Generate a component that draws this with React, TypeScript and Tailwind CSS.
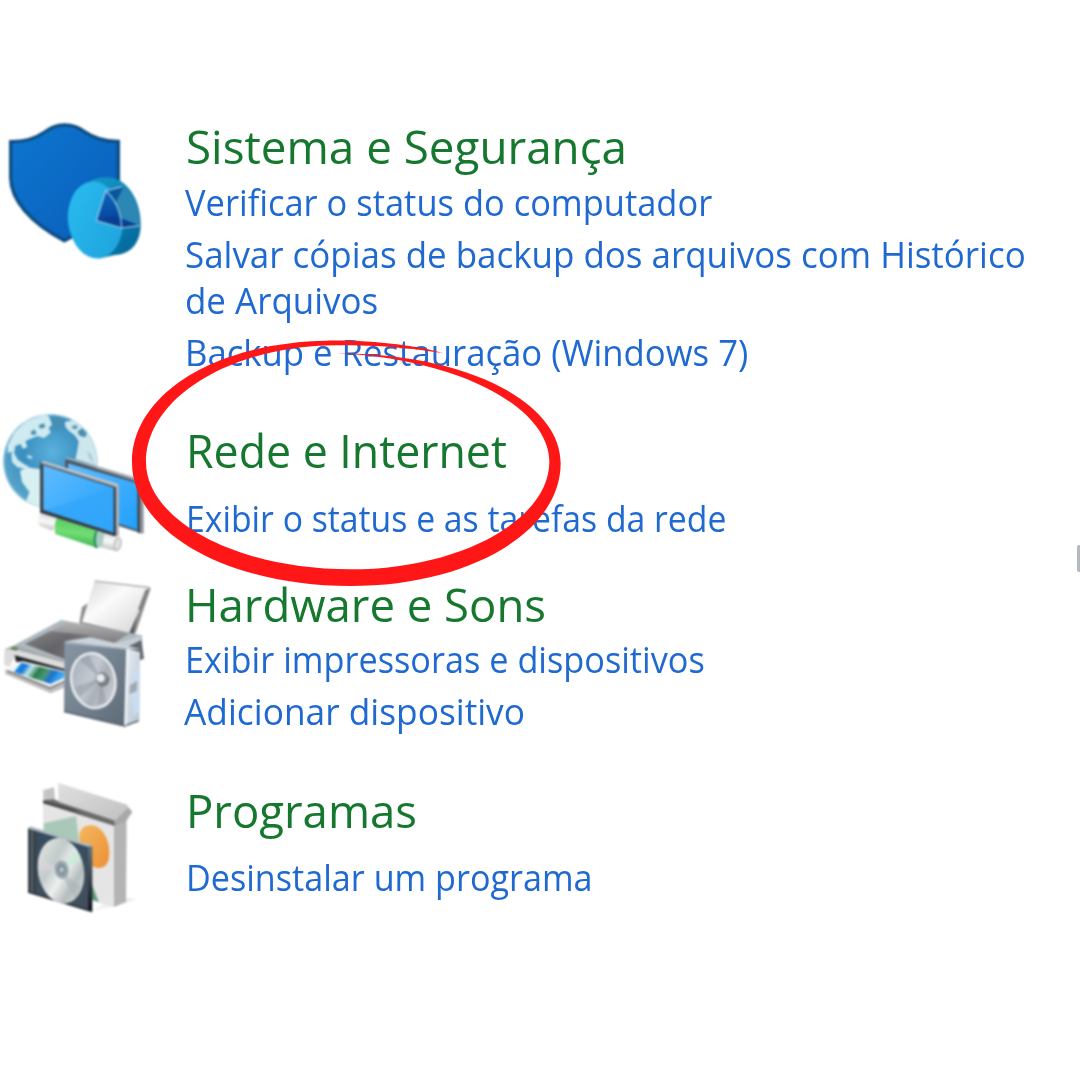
import type { ReactNode } from "react";

function ShieldIcon() {
  return (
    <svg viewBox="0 0 480 480" className="block h-[160px] w-[160px] blur-[0.8px]">
      <defs>
        <linearGradient id="shield" x1="0" y1="0" x2="1" y2="1">
          <stop offset="0" stopColor="#0d77cf" />
          <stop offset="1" stopColor="#0a5cba" />
        </linearGradient>
        <linearGradient id="pieFace" x1="0" y1="0" x2="1" y2="1">
          <stop offset="0" stopColor="#2abcf0" />
          <stop offset="1" stopColor="#1ea2dc" />
        </linearGradient>
        <linearGradient id="pieSide" x1="0" y1="0" x2="0.6" y2="1">
          <stop offset="0" stopColor="#1798cc" />
          <stop offset="1" stopColor="#046a9c" />
        </linearGradient>
        <linearGradient id="wedge" x1="0" y1="0" x2="0" y2="1">
          <stop offset="0" stopColor="#0a66b8" />
          <stop offset="1" stopColor="#053f98" />
        </linearGradient>
      </defs>
      <path d="M32 95 C78 96 108 84 134 66 C170 38 217 38 252 64 C281 84 311 95 355 94 L355 212 C355 282 290 344 193 392 C90 337 32 270 32 202 Z" fill="url(#shield)" stroke="#0b4c80" strokeWidth="10" />
      <path d="M270 214 C300 198 335 198 360 212 C400 236 423 290 422 344 C422 395 396 432 345 435 L300 445 Z" fill="url(#pieSide)" />
      <ellipse cx="286" cy="330" rx="82" ry="116" transform="rotate(-6 286 330)" fill="url(#pieFace)" />
      <path d="M317 243 L370 228 C400 250 420 300 419 346 L364 354 C362 310 345 268 317 243Z" fill="#2c87b4" />
      <path d="M317 243 L372 228 L345 282Z" fill="#08569d" />
      <path d="M317 243 C346 266 364 308 365 354 L289 332 Z" fill="url(#wedge)" />
      <path d="M289 332 L338 316 L417 346 L365 354Z" fill="#083f92" />
      <path d="M317 243 C346 266 364 308 365 354 L289 332 Z M317 243 L368 229 M365 354 L418 347" fill="none" stroke="#bce2f4" strokeWidth="3.5" opacity=".85" />
    </svg>
  );
}

function NetworkIcon() {
  return (
    <svg viewBox="0 0 480 480" className="block h-[160px] w-[160px] blur-[0.8px]">
      <defs>
        <radialGradient id="sea" cx=".52" cy=".4" r=".62">
          <stop offset="0" stopColor="#5ab2de" />
          <stop offset=".5" stopColor="#3b8fbe" />
          <stop offset="1" stopColor="#5fa9cc" />
        </radialGradient>
        <linearGradient id="screenTop" x1="0" y1="0" x2="1" y2="1">
          <stop offset="0" stopColor="#60bbff" />
          <stop offset="1" stopColor="#1fa0fb" />
        </linearGradient>
        <linearGradient id="screenLow" x1="0" y1="0" x2="1" y2="1">
          <stop offset="0" stopColor="#3aa9fa" />
          <stop offset="1" stopColor="#2fa5fb" />
        </linearGradient>
        <linearGradient id="plug" x1=".6" y1="0" x2=".4" y2="1">
          <stop offset="0" stopColor="#51c55c" />
          <stop offset=".5" stopColor="#72de74" />
          <stop offset="1" stopColor="#33a84a" />
        </linearGradient>
        <linearGradient id="cable" x1=".6" y1="0" x2=".4" y2="1">
          <stop offset="0" stopColor="#d5d5d5" />
          <stop offset=".5" stopColor="#fafafa" />
          <stop offset="1" stopColor="#b9b9b9" />
        </linearGradient>
        <clipPath id="globe"><circle cx="151" cy="184" r="142" /></clipPath>
      </defs>
      <g clipPath="url(#globe)">
        <circle cx="151" cy="184" r="142" fill="url(#sea)" />
        <path d="M140 40 L78 62 L42 98 L24 135 L22 160 L34 154 L36 186 L52 202 L72 206 L88 200 L72 192 L54 180 L42 160 L46 138 L62 132 L68 146 L82 142 L76 124 L92 116 L112 108 L132 114 L152 98 L146 84 L156 74 L150 56Z" fill="#cfeaf0" />
        <path d="M60 212 L82 202 L122 208 L128 330 L98 322 L78 304 L88 276 L66 246Z" fill="#d8f0f2" />
        <path d="M194 66 L232 58 L262 90 L288 140 L298 200 L248 184 L226 178 L232 150 L236 124 L224 106 L206 92 L196 80Z" fill="#cde7ec" />
        <path d="M232 96 L246 84 L262 96 L256 112 L240 108Z M92 96 L104 88 L110 102 L96 106Z M116 76 L132 70 L136 82 L120 86Z M216 78 L230 76 L232 86 L218 86Z" fill="#4a8fae" />
        <path d="M158 42 L198 54 L192 78 L170 94 L156 82Z" fill="#458fb6" />
        <path d="M84 164 L98 170 L94 178 L80 172Z" fill="#b9dde8" />
        <path d="M262 150 L274 164 L282 190 L266 174Z" fill="#a8cfdc" />
        <circle cx="151" cy="184" r="140" fill="none" stroke="#bfe0ea" strokeWidth="6" opacity=".6" />
      </g>
      <path d="M196 178 L420 244 L420 398 L350 376 L196 330Z" fill="#4a525c" />
      <path d="M204 190 L412 250 L412 390 L204 320Z" fill="url(#screenTop)" />
      <path d="M194 174 L203 172 L432 240 L425 248Z" fill="#a2a9b0" />
      <path d="M417 246 L431 242 L431 401 L417 398Z" fill="#8c9299" />
      <path d="M417 246 L417 400" stroke="#343a42" strokeWidth="5" />
      <path d="M124 340 L172 354 L158 392 L120 378 C110 366 112 350 124 340Z" fill="url(#cable)" />
      <path d="M304 394 L356 410 C370 418 366 448 350 454 L296 440Z" fill="url(#cable)" />
      <ellipse cx="353" cy="432" rx="10" ry="18" transform="rotate(14 353 432)" fill="#e2e2e2" stroke="#b5b5b5" strokeWidth="4" />
      <path d="M172 354 L292 392 C282 408 282 430 292 444 L166 402 C162 384 164 366 172 354Z" fill="url(#plug)" />
      <path d="M288 392 L314 400 L306 440 L288 445 C280 430 280 408 288 392Z" fill="#a8cdc0" />
      <path d="M290 394 C282 408 282 430 290 444" fill="none" stroke="#1e8856" strokeWidth="6" />
      <path d="M120 184 L355 258 L355 408 L344 408 L120 338Z" fill="#3c444e" />
      <path d="M130 196 L343 264 L343 398 L130 329Z" fill="url(#screenTop)" />
      <path d="M130 329 C200 315 270 282 343 264 L343 398Z" fill="url(#screenLow)" />
      <path d="M120 188 L130 183 L355 252 L352 262Z" fill="#c0c5ca" />
      <path d="M123 191 L344 261" stroke="#5b6b79" strokeWidth="4" />
      <path d="M346 262 L357 256 L357 405 L348 410Z" fill="#aeb2b6" />
      <path d="M344 264 L344 406 M122 334 L346 406" stroke="#303841" strokeWidth="6" />
    </svg>
  );
}

function PrinterIcon() {
  return (
    <svg viewBox="0 0 480 510" className="block h-[170px] w-[160px] blur-[1px]">
      <defs>
        <linearGradient id="paper" x1="0" y1="0" x2="1" y2="1">
          <stop offset="0" stopColor="#d4d4d4" />
          <stop offset=".4" stopColor="#fbfbfb" />
          <stop offset="1" stopColor="#d2d2d2" />
        </linearGradient>
        <linearGradient id="lid" x1="0" y1="0" x2="1" y2=".4">
          <stop offset="0" stopColor="#7e7e80" />
          <stop offset=".5" stopColor="#606064" />
          <stop offset="1" stopColor="#9b9b9d" />
        </linearGradient>
        <linearGradient id="lidShade" x1="0" y1="0" x2="0" y2="1">
          <stop offset="0" stopColor="#b4b4b4" />
          <stop offset="1" stopColor="#505054" />
        </linearGradient>
        <linearGradient id="box" x1="0" y1="0" x2="1" y2="1">
          <stop offset="0" stopColor="#8796a3" />
          <stop offset=".5" stopColor="#73828f" />
          <stop offset="1" stopColor="#5d6a76" />
        </linearGradient>
        <linearGradient id="boxSide" x1="0" y1="0" x2="1" y2="1">
          <stop offset="0" stopColor="#eaf0f6" />
          <stop offset="1" stopColor="#b5c3d0" />
        </linearGradient>
        <linearGradient id="cone" x1="0" y1="0" x2="1" y2="1">
          <stop offset="0" stopColor="#a2a9b3" />
          <stop offset=".45" stopColor="#c4c9d1" />
          <stop offset=".6" stopColor="#aab0b9" />
          <stop offset="1" stopColor="#d6d9df" />
        </linearGradient>
        <linearGradient id="photo" x1="0" y1="0" x2="1" y2=".3">
          <stop offset="0" stopColor="#1fa5f0" />
          <stop offset=".25" stopColor="#1777d8" />
          <stop offset=".38" stopColor="#bfe6ee" />
          <stop offset=".55" stopColor="#2c7a48" />
          <stop offset=".72" stopColor="#4a9878" />
          <stop offset=".85" stopColor="#1b6fd0" />
          <stop offset="1" stopColor="#3ba5ec" />
        </linearGradient>
      </defs>
      <path d="M16 298 L150 354 L196 338 L196 352 L152 370 L16 312Z" fill="#bdbdbd" />
      <path d="M246 112 L262 100 L262 150 L388 186 L442 62 L452 54 L408 186 L398 202 L238 160Z" fill="#8d8d8d" />
      <path d="M410 134 L396 140 L384 186 L400 196Z" fill="#55585b" />
      <path d="M284 32 L448 52 L388 188 L246 156Z" fill="url(#paper)" />
      <path d="M284 33 L450 53" stroke="#b5b5b5" strokeWidth="5" />
      <path d="M436 60 L452 54 L424 122 L414 118Z" fill="#828282" />
      <path d="M42 226 L184 150 L426 196 L428 268 L250 292 L196 300Z" fill="#aeb8bf" />
      <path d="M76 222 L206 156 L388 190 L334 224 L196 214 L196 268Z" fill="url(#lidShade)" />
      <path d="M76 222 L150 184 L270 196 L330 224 L196 222 L196 268Z" fill="url(#lid)" opacity=".75" />
      <path d="M340 222 L420 198 L424 214 L380 236Z" fill="#c6ced4" />
      <path d="M380 232 L424 210 L432 266 L388 280Z" fill="#62676d" />
      <path d="M14 236 L44 226 L196 272 L196 300 L46 258 L28 292 L12 284Z" fill="#dcdcdc" />
      <path d="M14 238 L44 226 L196 272 L196 278 L44 238Z" fill="#a1a8aa" />
      <path d="M44 256 L196 298 L196 314 L66 284 L48 276Z" fill="#202326" />
      <path d="M36 230 L56 234 L50 242 L32 238Z" fill="#5e8056" />
      <path d="M48 276 L70 274 L196 304 L196 332 L152 352 L22 304Z" fill="#f4f4f4" />
      <path d="M64 278 L194 307 L190 324 L152 342 L42 306Z" fill="url(#photo)" />
      <path d="M22 302 L150 354 L196 334" fill="none" stroke="#777" strokeWidth="5" />
      <path d="M194 214 L272 202 L424 238 L382 238Z" fill="#cbd4da" />
      <path d="M382 236 L420 246 L418 452 L372 470Z" fill="url(#boxSide)" />
      <path d="M404 300 C390 330 396 400 402 440 L418 420 L420 290Z" fill="#cbdcf0" />
      <path d="M390 346 L412 332 L410 364 L388 372Z" fill="#a2a8b0" />
      <path d="M194 216 L380 236 L374 470 L192 426Z" fill="url(#box)" />
      <path d="M194 217 L380 237" stroke="#a9b5bf" strokeWidth="5" />
      <path d="M192 424 L374 468 L416 452" fill="none" stroke="#596570" strokeWidth="5" />
      <path d="M382 238 L376 466" stroke="#f3f6f8" strokeWidth="7" />
      <ellipse cx="286" cy="334" rx="70" ry="86" transform="rotate(-12 286 334)" fill="#6d7986" />
      <ellipse cx="280" cy="332" rx="66" ry="83" transform="rotate(-12 280 332)" fill="url(#cone)" stroke="#eceff2" strokeWidth="7" />
      <path d="M302 325 L238 270 L266 254Z M302 325 L240 382 L222 352Z M302 325 L294 404 L320 396Z" fill="#858d99" opacity=".4" />
      <ellipse cx="308" cy="328" rx="20" ry="22" fill="#858a90" />
      <circle cx="302" cy="324" r="12" fill="#e8eaec" />
      <path d="M298 344 C316 350 326 338 326 322" fill="none" stroke="#6c7176" strokeWidth="5" />
    </svg>
  );
}

function ProgramsIcon() {
  return (
    <svg viewBox="0 0 480 480" className="block h-[160px] w-[160px] blur-[0.8px]">
      <defs>
        <linearGradient id="flap" x1="0" y1="0" x2="1" y2="1">
          <stop offset="0" stopColor="#e0e0e0" />
          <stop offset="1" stopColor="#c0c0c0" />
        </linearGradient>
        <linearGradient id="orange" x1="0" y1="0" x2="1" y2="1">
          <stop offset="0" stopColor="#f4b65d" />
          <stop offset="1" stopColor="#eb9138" />
        </linearGradient>
        <linearGradient id="jewel" x1="0" y1="0" x2="0" y2="1">
          <stop offset="0" stopColor="#354c5f" />
          <stop offset="1" stopColor="#42505e" />
        </linearGradient>
        <linearGradient id="disc" x1=".1" y1="0" x2=".9" y2="1">
          <stop offset="0" stopColor="#e5eae8" />
          <stop offset=".35" stopColor="#c2cbca" />
          <stop offset=".55" stopColor="#edf0ef" />
          <stop offset=".75" stopColor="#b4bdbd" />
          <stop offset="1" stopColor="#e1e3e2" />
        </linearGradient>
        <linearGradient id="edge" x1="0" y1="0" x2="0" y2="1">
          <stop offset="0" stopColor="#65757f" />
          <stop offset="1" stopColor="#0b0d11" />
        </linearGradient>
      </defs>
      <path d="M340 410 L376 400 L410 386 L378 384Z" fill="#ededed" />
      <path d="M280 420 L312 402 L342 410Z" fill="#efefef" />
      <path d="M129 92 L344 162 L342 411 L129 350Z" fill="#e5e5e5" />
      <path d="M342 162 L380 150 L378 396 L342 411Z" fill="#b4b4b4" />
      <path d="M130 60 L162 52 L166 96 L130 92Z" fill="#c4c4c4" />
      <path d="M130 91 L160 88 L348 152 L344 168 L130 100Z" fill="#6b6b6b" />
      <path d="M130 92 L216 116 L250 132 L130 100Z" fill="#444" />
      <path d="M174 38 L382 104 L386 122 L350 154 L176 96Z" fill="url(#flap)" />
      <path d="M342 155 L386 112 L397 126 L378 154 L346 166Z" fill="#a8a8a8" />
      <path d="M132 160 L228 138 L238 224 L130 190Z" fill="#a9c8b8" />
      <path d="M272 334 L296 396 L272 388Z" fill="#5c9d7c" />
      <path d="M238 208 C236 180 250 165 274 166 C306 168 329 208 328 248 C328 282 314 297 289 293 C273 291 256 272 248 250Z" fill="url(#orange)" />
      <path d="M84 174 L276 230 L276 424 L84 366Z" fill="url(#jewel)" />
      <path d="M84 174 L110 182 L108 374 L84 366Z" fill="#39424a" />
      <path d="M96 178 L96 369" stroke="#66717a" strokeWidth="4" />
      <path d="M82 175 L92 169 L276 226 L276 234Z" fill="#b2bdc1" />
      <path d="M265 229 L277 229 L277 425 L265 421Z" fill="url(#edge)" />
      <path d="M84 366 L276 424" stroke="#252d34" strokeWidth="5" />
      <ellipse cx="183" cy="302" rx="69" ry="99" transform="rotate(-10 183 302)" fill="url(#disc)" />
      <path d="M190 286 L226 238 L242 270 L198 294Z" fill="#c8ead6" opacity=".8" />
      <path d="M168 290 L114 264 L118 300 L166 302Z" fill="#dcd4e0" opacity=".6" />
      <path d="M196 316 L244 350 L226 386 L188 322Z" fill="#aab3b5" opacity=".55" />
      <ellipse cx="185" cy="299" rx="21" ry="28" transform="rotate(-10 185 299)" fill="#9ca9b1" />
      <ellipse cx="185" cy="299" rx="13" ry="18" transform="rotate(-10 185 299)" fill="#83919b" />
      <ellipse cx="185" cy="299" rx="6" ry="8" fill="#bcc6cb" />
    </svg>
  );
}

function Category({ icon, iconClass, className, children }: { icon: ReactNode; iconClass: string; className: string; children: ReactNode }) {
  return (
    <section className={`flex ${className}`}>
      <div className={`w-[183px] shrink-0 ${iconClass}`}>{icon}</div>
      <div className="flex flex-col items-start">{children}</div>
    </section>
  );
}

function Heading({ className, children }: { className: string; children: ReactNode }) {
  return <h2 className={`origin-left text-[46px] leading-[60px] font-normal whitespace-nowrap text-[#15782e] blur-[0.6px] ${className}`}>{children}</h2>;
}

function TaskLink({ className, children }: { className: string; children: ReactNode }) {
  return <a href="#" className={`block origin-left text-[37px] leading-[46px] whitespace-nowrap text-[#1f69d1] blur-[0.6px] ${className}`}>{children}</a>;
}

export default function App() {
  return (
    <main className="relative h-[1080px] w-[1080px] overflow-hidden bg-white pt-[116px] font-['Open_Sans',sans-serif]">
      <Category icon={<ShieldIcon />} iconClass="-mt-[6px]" className="h-[304px]">
        <Heading className="ml-[2.5px] scale-x-[0.995]">Sistema e Segurança</Heading>
        <TaskLink className="mt-[3px] ml-[2px] scale-x-[0.931]">Verificar o status do computador</TaskLink>
        <TaskLink className="mt-[6px] ml-[2px] scale-x-[0.944]">
          Salvar cópias de backup dos arquivos com Histórico
          <br />
          de Arquivos
        </TaskLink>
        <TaskLink className="mt-[6px] ml-[2px] scale-x-[0.938]">Backup e Restauração (Windows 7)</TaskLink>
      </Category>
      <Category icon={<NetworkIcon />} iconClass="-mt-[20px]" className="h-[154px]">
        <Heading className="ml-[2.5px] scale-x-[0.971]">Rede e Internet</Heading>
        <TaskLink className="mt-[15px] ml-[2.5px] scale-x-[0.912]">Exibir o status e as tarefas da rede</TaskLink>
      </Category>
      <Category icon={<PrinterIcon />} iconClass="-mt-[4px]" className="h-[206px]">
        <Heading className="ml-[1.5px] scale-x-[0.989]">Hardware e Sons</Heading>
        <TaskLink className="mt-[2px] ml-[1.5px] scale-x-[0.926]">Exibir impressoras e dispositivos</TaskLink>
        <TaskLink className="mt-[6px] ml-[1px] scale-x-[0.954]">Adicionar dispositivo</TaskLink>
      </Category>
      <Category icon={<ProgramsIcon />} iconClass="-mt-[10px]" className="h-[160px]">
        <Heading className="ml-[2.5px] scale-x-[0.989]">Programas</Heading>
        <TaskLink className="mt-[14px] ml-[2.5px] scale-x-[0.923]">Desinstalar um programa</TaskLink>
      </Category>

      {/* hand-drawn ring around the network category */}
      <svg viewBox="0 0 1380 810" className="pointer-events-none absolute top-[330px] left-[120px] h-[270px] w-[460px]">
        <path d="M970 70 C900 48 760 30 620 32 C280 38 36 195 36 397 C36 610 330 768 690 768 C1050 768 1322 605 1322 400 C1322 215 1040 70 648 70 C1010 85 1288 230 1288 395 C1288 570 1020 718 690 718 C350 718 78 570 78 397 C78 200 340 46 650 46 C780 44 900 58 970 70Z" fill="#ff1616" />
      </svg>
      <div className="absolute top-[545px] right-0 h-[27px] w-[3px] rounded-l-[2px] bg-[#b4b9bd] blur-[0.7px]" />
    </main>
  );
}
